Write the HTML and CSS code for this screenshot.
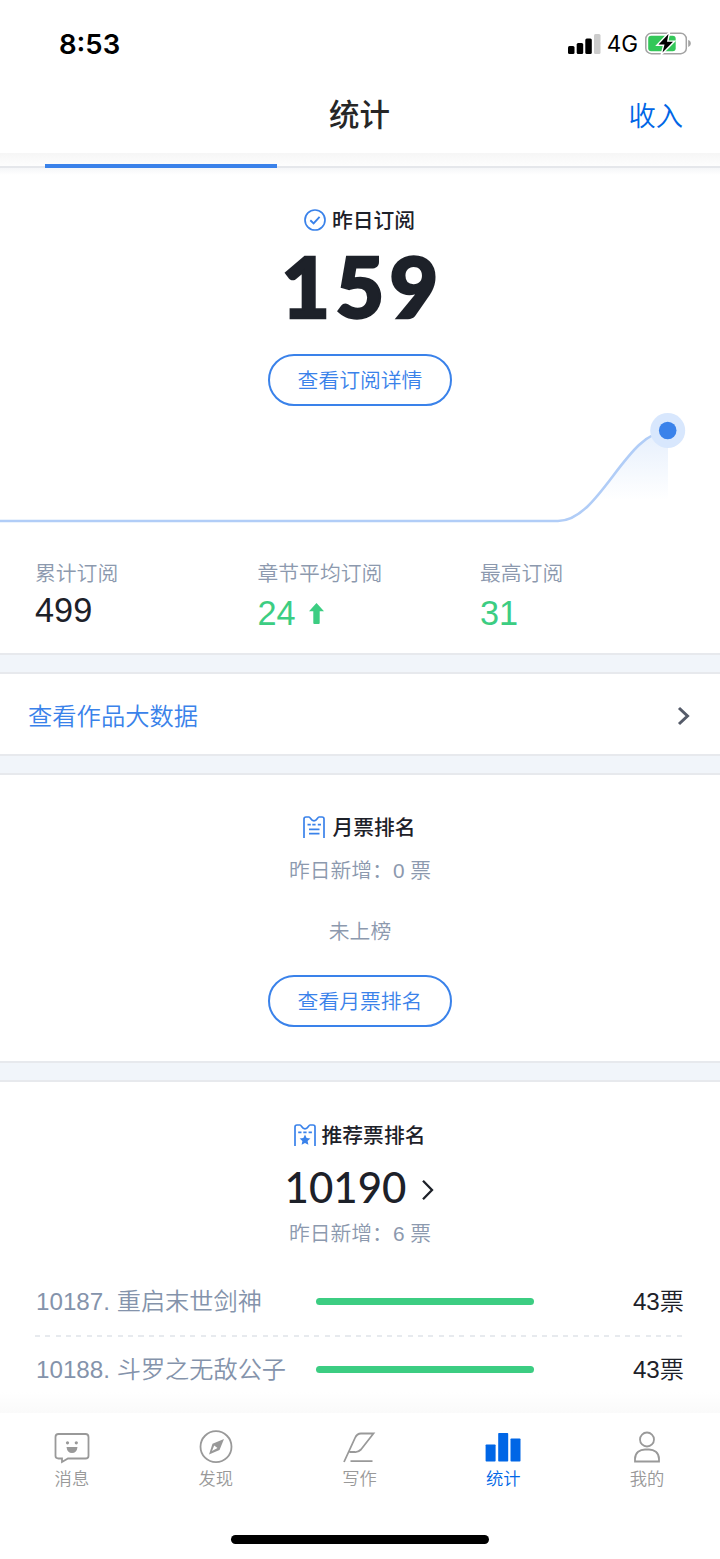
FILE: index.html
```html
<!DOCTYPE html>
<html lang="zh-CN">
<head>
    <meta charset="UTF-8">
    <meta name="viewport" content="width=device-width, initial-scale=1.0">
    <title>统计</title>
    <link rel="stylesheet" href="styles.css">
</head>
<body>

    <!-- Status bar -->
    <div class="status-bar">
        <span class="time">8:53</span>
        <div class="status-right">
            <svg class="signal" width="33" height="20" viewBox="0 0 33 20">
                <rect x="0" y="12" width="6.5" height="8" rx="1.5"/>
                <rect x="8.7" y="9" width="6.5" height="11" rx="1.5"/>
                <rect x="17.3" y="4.5" width="6.5" height="15.5" rx="1.5"/>
                <rect x="26" y="0" width="6.5" height="20" rx="1.5" fill="#cccccc"/>
            </svg>
            <span class="network">4G</span>
            <svg class="battery" width="46" height="24" viewBox="0 0 46 24">
                <rect x="0.8" y="1.3" width="40.5" height="20.4" rx="5.5" fill="#fff" stroke="#a3a3a3" stroke-width="1.5"/>
                <rect x="3.2" y="3.7" width="27.5" height="15.6" rx="3" fill="#34c759"/>
                <path d="M43.2 8.1c1.8.6 2.6 1.8 2.6 3.4s-.8 2.8-2.6 3.4z" fill="#a3a3a3"/>
                <path d="M23.5 2L13.5 12.5h6L17.5 20.5L28 9.8h-6z" fill="#000" stroke="#fff" stroke-width="2.8" paint-order="stroke"/>
            </svg>
        </div>
    </div>

    <!-- Title bar -->
    <header class="title-bar">
        <h1>统计</h1>
        <a href="#" class="income">收入</a>
    </header>
    <div class="tab-strip"><div class="tab-line"></div></div>

    <!-- Subscriptions -->
    <section class="card subscribe">
        <h2 class="card-title">
            <svg width="22" height="22" viewBox="0 0 22 22" fill="none" stroke="#3a82ea" stroke-width="1.7">
                <circle cx="11" cy="11" r="10"/>
                <path d="M6.3 11.2l3.3 3.2 6-6.6" stroke-width="1.9"/>
            </svg>
            <span>昨日订阅</span>
        </h2>
        <div class="big-number">159</div>
        <a href="#" class="btn">查看订阅详情</a>
        <svg class="chart" width="720" height="134" viewBox="0 0 720 134">
            <defs>
                <linearGradient id="fade" x1="0" y1="24" x2="0" y2="94" gradientUnits="userSpaceOnUse">
                    <stop offset="0" stop-color="#3a82ea" stop-opacity="0.13"/>
                    <stop offset="1" stop-color="#3a82ea" stop-opacity="0"/>
                </linearGradient>
            </defs>
            <path d="M0 115H558C600 115 626 25 668 25V115z" fill="url(#fade)"/>
            <path d="M0 115H558C600 115 626 25 668 25" fill="none" stroke="#b1cdf7" stroke-width="2.6"/>
            <circle cx="667.7" cy="24.5" r="17.5" fill="#d8e7fd"/>
            <circle cx="667.7" cy="24.5" r="8.8" fill="#3a82ea"/>
        </svg>
        <div class="stats">
            <div class="stat">
                <p>累计订阅</p>
                <strong>499</strong>
            </div>
            <div class="stat up">
                <p>章节平均订阅</p>
                <strong>24
                    <svg width="15" height="21" viewBox="0 0 15 21"><path d="M7.5 0L15 8.2H10.7V20a1 1 0 0 1-1 1H5.3a1 1 0 0 1-1-1V8.2H0z" fill="#3ccd82"/></svg>
                </strong>
            </div>
            <div class="stat up">
                <p>最高订阅</p>
                <strong>31</strong>
            </div>
        </div>
    </section>

    <a href="#" class="card link-row">
        <span>查看作品大数据</span>
        <svg width="14" height="20" viewBox="0 0 14 20" fill="none" stroke="#555b69" stroke-width="3"><path d="M2 2l8.5 8L2 18"/></svg>
    </a>

    <!-- Monthly votes -->
    <section class="card month">
        <h2 class="card-title">
            <svg class="wide-gap" width="22" height="22" viewBox="0 0 22 22" fill="none" stroke="#3a82ea" stroke-width="1.7">
                <path d="M1 22V3Q1 1 3 1H6C7.5 1 8 4.8 11 4.8S14.5 1 16 1H19Q21 1 21 3V22"/>
                <path d="M4.5 8.7h3.3M9.3 8.7h3.3M14.8 8.7H18M6 13.4h10.5M6 17.7h10.5"/>
            </svg>
            <span>月票排名</span>
        </h2>
        <p class="sub">昨日新增：0 票</p>
        <p class="empty">未上榜</p>
        <a href="#" class="btn">查看月票排名</a>
    </section>

    <!-- Recommendation votes -->
    <section class="card recommend">
        <h2 class="card-title">
            <svg width="22" height="22" viewBox="0 0 22 22" fill="none" stroke="#3a82ea" stroke-width="1.7">
                <path d="M1 22V3Q1 1 3 1H6C7.5 1 8 4.8 11 4.8S14.5 1 16 1H19Q21 1 21 3V22"/>
                <path d="M4.2 8.4h3.3M9.3 8.4h3.3M14.6 8.4h3.3"/>
                <path d="M11 10.5l1.6 3.5 3.8.4-2.8 2.6.8 3.8-3.4-1.9-3.4 1.9.8-3.8-2.8-2.6 3.800-.4z" fill="#3a82ea" stroke="none"/>
            </svg>
            <span>推荐票排名</span>
        </h2>
        <div class="rank">
            <span>10190</span>
            <svg width="14" height="20" viewBox="0 0 14 20" fill="none" stroke="#1d2129" stroke-width="2.3"><path d="M2 .8l9 9.2-9 9.2"/></svg>
        </div>
        <p class="sub">昨日新增：6 票</p>
        <ul class="rank-list">
            <li>
                <span class="name">10187. 重启末世剑神</span>
                <span class="bar"></span>
                <span class="votes">43票</span>
            </li>
            <li>
                <span class="name">10188. 斗罗之无敌公子</span>
                <span class="bar"></span>
                <span class="votes">43票</span>
            </li>
        </ul>
    </section>

    <!-- Bottom tabs -->
    <nav class="tab-bar">
        <a href="#">
            <svg width="36" height="34" viewBox="0 0 36 34" fill="none" stroke="#999" stroke-width="1.8">
                <path d="M4.5 4H31.5Q34.5 4 34.5 7V26Q34.5 28.5 31.5 28.5H14L8 32V28.5H4.5Q1.5 28.5 1.5 26V7Q1.5 4 4.5 4z"/>
                <circle cx="13.5" cy="12.8" r="1.6" fill="#999" stroke="none"/>
                <circle cx="22.3" cy="12.8" r="1.6" fill="#999" stroke="none"/>
                <path d="M12.5 17H23.5Q22.8 23 18 23T12.5 17z" fill="#999" stroke="none"/>
            </svg>
            <span>消息</span>
        </a>
        <a href="#">
            <svg width="36" height="34" viewBox="0 0 36 34" fill="none" stroke="#999" stroke-width="1.8">
                <circle cx="18" cy="16.7" r="15.5"/>
                <path d="M26 9L14.5 13.8L11 24.5L21.5 20z" fill="#999" stroke="none"/>
                <path d="M16.2 15.500L19.5 18L14 21z" fill="#fff" stroke="none"/>
            </svg>
            <span>发现</span>
        </a>
        <a href="#">
            <svg width="36" height="34" viewBox="0 0 36 34" fill="none" stroke="#999" stroke-width="1.8">
                <path d="M3 32L14 8Q16 3.5 20 3.5H32.5L20 19.5Q17 22.5 13.5 22H8.5M9.5 31.2H31.5"/>
            </svg>
            <span>写作</span>
        </a>
        <a href="#" class="active">
            <svg width="36" height="34" viewBox="0 0 36 34" fill="#0066e6">
                <rect x="0.6" y="14.5" width="10" height="17" rx="0.8"/>
                <rect x="13.2" y="3" width="10" height="28.5" rx="0.8"/>
                <rect x="25.5" y="8.5" width="10" height="23" rx="0.8"/>
            </svg>
            <span>统计</span>
        </a>
        <a href="#">
            <svg width="36" height="34" viewBox="0 0 36 34" fill="none" stroke="#999" stroke-width="1.8">
                <circle cx="18" cy="9.5" r="7"/>
                <path d="M6 31.5V29C6 22.5 11 19.5 16 19.5H20C25 19.5 30 22.5 30 29V31.5z"/>
            </svg>
            <span>我的</span>
        </a>
    </nav>
    <div class="home-area"><div class="home-bar"></div></div>

</body>
</html>
```
FILE: styles.css
```css
* {
    box-sizing: border-box;
}
body {
    width: 720px;
    height: 1559px;
    margin: 0;
    overflow: hidden;
    font-family: "Liberation Sans", "Noto Sans CJK SC", sans-serif;
    font-weight: 350;
    background-color: #f1f5fa;
    color: #1d2129;
}
h1, h2, p, ul {
    margin: 0;
    padding: 0;
}
a {
    color: #3a82ea;
    text-decoration: none;
}
svg {
    display: block;
    flex: none;
}

/* Status bar */
.status-bar {
    display: flex;
    justify-content: space-between;
    height: 88px;
    padding: 29px 29px 0 59px;
    background-color: #fff;
    color: #000;
}
.time {
    font-family: Inter, sans-serif;
    font-size: 27.5px;
    font-weight: 600;
    line-height: 30px;
}
.status-right {
    display: flex;
    align-items: center;
    height: 29px;
}
.network {
    margin: 0 7px 0 6px;
    font-family: Inter, sans-serif;
    font-size: 22.5px;
    font-weight: 400;
}

/* Title bar */
.title-bar {
    display: grid;
    grid-template-columns: 1fr auto 1fr;
    align-items: center;
    height: 65px;
    padding: 0 37px 11px;
    background-color: #fff;
}
.title-bar h1 {
    grid-column: 2;
    font-size: 30.5px;
    font-weight: 500;
    line-height: 40px;
    padding: 0 1px 1px 0;
    color: #262626;
}
.income {
    justify-self: end;
    padding-top: 3px;
    font-size: 27.3px;
    line-height: 38px;
    color: #0066e6;
}
.tab-strip {
    height: 15px;
    padding: 11px 45px 0;
    background: linear-gradient(#f6f6f6, #fdfdfd);
    border-bottom: 2px solid #e5e7eb;
}
.tab-line {
    width: 232px;
    height: 4px;
    background-color: #3a82ea;
}

/* Cards */
.card {
    display: flex;
    flex-direction: column;
    align-items: center;
    background-color: #fff;
    border-bottom: 2px solid #e7e9ed;
}
.card-title {
    display: flex;
    align-items: center;
    gap: 6px;
    height: 30px;
    padding-right: 1px;
    font-size: 20.8px;
    font-weight: 500;
}
.card-title span {
    padding-bottom: 2px;
}
.card-title .wide-gap {
    margin-right: 1px;
}
.btn {
    width: 184px;
    height: 52px;
    border: 2px solid #3a82ea;
    border-radius: 26px;
    font-size: 20.8px;
    line-height: 49px;
    text-align: center;
}
.sub, .empty {
    font-size: 20.8px;
    line-height: 30px;
    color: #8c99ae;
}

.subscribe {
    height: 487px;
    padding-top: 37px;
    background: linear-gradient(#f5f6f8, #fff 7px);
}
.big-number {
    height: 84px;
    margin: 9px 0 26px;
    padding-left: 5px;
    font-family: Lato, sans-serif;
    font-size: 84px;
    font-weight: 900;
    line-height: 84px;
    letter-spacing: 5.5px;
    -webkit-text-stroke: 2.5px #1d2129;
}
.stats {
    display: grid;
    grid-template-columns: 222.5px 222.5px 1fr;
    width: 100%;
    padding: 19px 0 0 35px;
}
.stat p {
    font-size: 20.8px;
    line-height: 30px;
    color: #8c99ae;
}
.stat strong {
    display: flex;
    align-items: center;
    gap: 13px;
    height: 42px;
    font-size: 34.3px;
    font-weight: 400;
}
.up strong {
    height: 49px;
    color: #3ccd82;
}

.link-row {
    flex-direction: row;
    justify-content: space-between;
    height: 84px;
    margin-top: 17px;
    padding: 0 29px 0 28px;
    border-top: 2px solid #e7e9ed;
    font-size: 24.3px;
}
.link-row svg {
    margin-top: 3px;
}

.month {
    height: 290px;
    margin-top: 17px;
    padding-top: 37px;
    border-top: 2px solid #e7e9ed;
}
.month .sub {
    margin-top: 14px;
}
.empty {
    margin: 31px 0 28px;
}

.recommend {
    height: 333px;
    margin-top: 17px;
    padding-top: 38px;
    border-top: 2px solid #e7e9ed;
    border-bottom: none;
    background: linear-gradient(#fff 310px, #fafafa);
}
.rank {
    display: flex;
    align-items: center;
    gap: 15px;
    height: 46px;
    margin: 14px 0 9px;
    font-family: Lato, sans-serif;
    font-size: 42px;
    font-weight: 500;
}
.rank svg {
    margin-top: 5px;
}
.rank-list {
    width: 650px;
    margin-top: 20px;
    list-style: none;
}
.rank-list li {
    display: grid;
    grid-template-columns: 280px 218px 1fr;
    align-items: center;
    height: 68px;
    padding: 0 1px 4px;
    font-size: 24.2px;
    line-height: 36px;
}
.rank-list li:first-child {
    background: repeating-linear-gradient(90deg, #e7eaee 0 5px, transparent 5px 10.35px) bottom / 100% 2px no-repeat;
}
.name, .votes {
    padding-top: 1px;
}
.name {
    color: #8493ab;
    white-space: nowrap;
}
.bar {
    height: 7px;
    border-radius: 4px;
    background-color: #3ccd82;
}
.votes {
    text-align: right;
}

/* Bottom tabs */
.tab-bar {
    display: flex;
    height: 90px;
    padding: 17px 1px 0 0;
    background-color: #fff;
}
.tab-bar a {
    display: flex;
    flex: 1;
    flex-direction: column;
    align-items: center;
    font-size: 17.3px;
    line-height: 31px;
    color: #999;
}
.tab-bar .active {
    color: #0066e6;
}
.home-area {
    height: 60px;
    padding-top: 32px;
    background-color: #fff;
}
.home-bar {
    width: 258px;
    height: 9px;
    margin: 0 auto;
    border-radius: 5px;
    background-color: #000;
}
```
